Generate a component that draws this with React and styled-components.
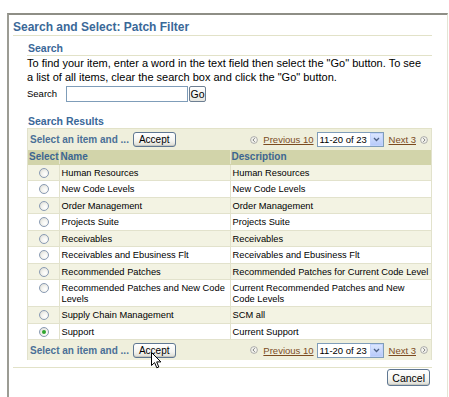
import React from "react";
import styled, { createGlobalStyle } from "styled-components";

const GlobalStyle = createGlobalStyle`
  html, body { margin: 0; padding: 0; background: #fff; overflow: hidden; }
  body { font-family: "Liberation Sans", Arial, sans-serif; color: #000; }
  * { box-sizing: border-box; }
`;

const Page = styled.div`
  padding: 13px 0 0 7px;
  height: 397px;
`;

const Dialog = styled.div`
  width: 441px;
  height: 400px;
  border-top: 2px solid #8e8e86;
  border-left: 2px solid #9c9c94;
  border-right: 1px solid #e4e4d4;
  padding: 0 15px 0 4px;
`;

const Title = styled.h1`
  margin: 0;
  padding-top: 4px;
  font-size: 12px;
  font-weight: bold;
  line-height: 16px;
  color: #3a6898;
  border-bottom: 1px solid #e2e2c8;
`;

const Section = styled.div`
  padding-left: 14px;
`;

const SubHeader = styled.h2`
  margin: ${(p) => p.$top}px 0 0;
  padding-left: 1px;
  font-size: 10.5px;
  font-weight: bold;
  line-height: 14px;
  color: #3a6898;
  border-bottom: 1px solid #e2e2c8;
`;

const Para = styled.p`
  margin: 0;
  font-size: 11px;
  line-height: 14px;
`;

const SearchRow = styled.div`
  display: flex;
  align-items: center;
  height: 17px;
  margin-top: 1px;
`;

const Label = styled.span`
  width: 39px;
  font-size: 9.5px;
`;

const TextInput = styled.input`
  width: 122px;
  height: 16px;
  border: 1px solid #7f9db9;
  padding: 0 2px;
  margin: 0;
  background: #fff;
`;

const SmallButton = styled.button`
  margin: 0 0 0 1px;
  width: 17px;
  height: 16px;
  padding: 0;
  font-family: "Liberation Sans", Arial, sans-serif;
  font-size: 10.5px;
  border: 1px solid #6d7f93;
  border-radius: 2px;
  background: linear-gradient(#ffffff, #e6e6e0);
  color: #000;
`;

const Results = styled.div`
  width: 405px;
  border-left: 1px solid #e2e2cc;
  border-right: 1px solid #e2e2cc;
`;

const Bar = styled.div`
  display: flex;
  align-items: center;
  justify-content: space-between;
  height: ${(p) => p.$h}px;
  padding: 0 3px 0 2px;
  background: #efefdc;
`;

const BarLeft = styled.div`
  display: flex;
  align-items: center;
`;

const BarText = styled.span`
  font-size: 10px;
  font-weight: bold;
  color: #4b7097;
`;

const ButtonWrap = styled.span`
  position: relative;
  margin-left: 4px;
  display: inline-flex;
`;

const Button = styled.button`
  height: ${(p) => p.$h || 15}px;
  padding: 0 ${(p) => p.$px || 5}px;
  margin: 0;
  font-family: "Liberation Sans", Arial, sans-serif;
  font-size: ${(p) => p.$fs || 10}px;
  color: #000;
  border: 1px solid #5f7792;
  border-radius: 3px;
  background: linear-gradient(#ffffff 0%, #f4f4f0 60%, #dcdcd4 100%);
  box-shadow: inset 0 -1px 0 #c8c8c0;
`;

const Nav = styled.div`
  display: flex;
  align-items: center;
  font-size: 9.5px;
`;

const Link = styled.a`
  color: #7b4b1f;
  text-decoration: underline;
  margin: 0 ${(p) => p.$mr}px 0 ${(p) => p.$ml}px;
  cursor: pointer;
`;

const Select = styled.div`
  display: flex;
  align-items: stretch;
  width: 67px;
  height: 15px;
  border: 1px solid #7f9db9;
  background: #fff;
`;

const SelectText = styled.span`
  flex: 1;
  font-size: 9.5px;
  line-height: 13px;
  padding-left: 2px;
`;

const SelectArrow = styled.span`
  width: 13px;
  display: flex;
  align-items: center;
  justify-content: center;
  background: linear-gradient(#dbe6fe, #b7cafa);
  border: 1px solid #c3d3fd;
`;

const Table = styled.table`
  width: 403px;
  table-layout: fixed;
  border-collapse: collapse;
  font-size: 9.3px;
`;

const Th = styled.th`
  text-align: left;
  font-size: 10px;
  font-weight: bold;
  color: #3c6691;
  background: #d2d4aa;
  line-height: 13px;
  height: 14px;
  padding: 0 0 0 1px;
  border-bottom: 1px solid #d2d4aa;
  border-left: 1px solid #e6e6d0;
  white-space: nowrap;
  &:first-child { border-left: none; }
`;

const Tr = styled.tr`
  background: ${(p) => (p.$band ? "#f3f3e3" : "#ffffff")};
`;

const Td = styled.td`
  vertical-align: top;
  line-height: 10.5px;
  padding: 3px 0 2px 2px;
  border-bottom: 1px solid #e2e2cc;
  border-left: 1px solid #e2e2cc;
  white-space: nowrap;
  overflow: hidden;
  &:first-child { border-left: none; text-align: center; padding: 3px 0 2px 0; }
`;

const Radio = styled.span`
  display: inline-flex;
  align-items: center;
  justify-content: center;
  width: 10px;
  height: 10px;
  margin-left: 1px;
  border-radius: 50%;
  border: 1px solid #8a9bb3;
  background: radial-gradient(circle at 65% 65%, #ffffff 0%, #f2f2ee 45%, #d4d4cc 100%);
  vertical-align: top;
  &::after {
    content: "";
    width: 4px;
    height: 4px;
    border-radius: 50%;
    background: ${(p) => (p.$checked ? "#2fa62f" : "transparent")};
  }
`;

const Footer = styled.div`
  margin-top: 7px;
  border-top: 1px solid #e2e2c8;
  display: flex;
  justify-content: flex-end;
  padding: 1px 2px 0 0;
`;

const Cursor = styled.svg`
  position: absolute;
  left: 18px;
  top: 9px;
  pointer-events: none;
`;

const NavIcon = ({ dir }) => (
  <svg width="8" height="8" viewBox="0 0 8 8">
    <circle cx="4" cy="4" r="3.4" fill="#f4f4ee" stroke="#9a9a9a" strokeWidth="0.8" />
    <path
      d={dir === "prev" ? "M4.8 2.2 L2.9 4 L4.8 5.8" : "M3.2 2.2 L5.1 4 L3.2 5.8"}
      fill="none"
      stroke="#777"
      strokeWidth="0.9"
    />
  </svg>
);

const Pager = () => (
  <Nav>
    <NavIcon dir="prev" />
    <Link $ml={5} $mr={3}>Previous 10</Link>
    <Select>
      <SelectText>11-20 of 23</SelectText>
      <SelectArrow>
        <svg width="7" height="5" viewBox="0 0 7 5">
          <path d="M1 1 L3.5 3.5 L6 1" fill="none" stroke="#4d6185" strokeWidth="1.3" />
        </svg>
      </SelectArrow>
    </Select>
    <Link $ml={5} $mr={4}>Next 3</Link>
    <NavIcon dir="next" />
  </Nav>
);

const rows = [
  ["Human Resources", "Human Resources"],
  ["New Code Levels", "New Code Levels"],
  ["Order Management", "Order Management"],
  ["Projects Suite", "Projects Suite"],
  ["Receivables", "Receivables"],
  ["Receivables and Ebusiness Flt", "Receivables and Ebusiness Flt"],
  ["Recommended Patches", "Recommended Patches for Current Code Level"],
  [
    ["Recommended Patches and New Code", "Levels"],
    ["Current Recommended Patches and New", "Code Levels"],
  ],
  ["Supply Chain Management", "SCM all"],
  ["Support", "Current Support"],
];

const Cell = ({ v }) =>
  Array.isArray(v) ? (
    <>
      {v[0]}
      <br />
      {v[1]}
    </>
  ) : (
    v
  );

export default function App() {
  return (
    <>
      <GlobalStyle />
      <Page>
        <Dialog>
          <Title>Search and Select: Patch Filter</Title>
          <Section>
            <SubHeader $top={5}>Search</SubHeader>
            <Para>
              To find your item, enter a word in the text field then select the "Go" button. To see
              <br />a list of all items, clear the search box and click the "Go" button.
            </Para>
            <SearchRow>
              <Label>Search</Label>
              <TextInput />
              <SmallButton>Go</SmallButton>
            </SearchRow>
            <SubHeader $top={12}>Search Results</SubHeader>
            <Results>
              <Bar $h={21}>
                <BarLeft>
                  <BarText>Select an item and ...</BarText>
                  <ButtonWrap>
                    <Button>Accept</Button>
                  </ButtonWrap>
                </BarLeft>
                <Pager />
              </Bar>
              <Table>
                <colgroup>
                  <col style={{ width: 31 }} />
                  <col style={{ width: 171 }} />
                  <col style={{ width: 201 }} />
                </colgroup>
                <thead>
                  <tr>
                    <Th>Select</Th>
                    <Th>Name</Th>
                    <Th>Description</Th>
                  </tr>
                </thead>
                <tbody>
                  {rows.map((r, i) => (
                    <Tr key={i} $band={i % 2 === 0}>
                      <Td>
                        <Radio $checked={i === 9} />
                      </Td>
                      <Td>
                        <Cell v={r[0]} />
                      </Td>
                      <Td>
                        <Cell v={r[1]} />
                      </Td>
                    </Tr>
                  ))}
                </tbody>
              </Table>
              <Bar $h={20}>
                <BarLeft>
                  <BarText>Select an item and ...</BarText>
                  <ButtonWrap>
                    <Button>Accept</Button>
                    <Cursor width="11" height="17" viewBox="0 0 11 17">
                      <path
                        d="M0.5 0.5 L0.5 13.5 L3.6 10.6 L5.8 15.8 L7.8 15 L5.7 9.9 L9.9 9.9 Z"
                        fill="#fff"
                        stroke="#000"
                        strokeWidth="1"
                        strokeLinejoin="miter"
                      />
                    </Cursor>
                  </ButtonWrap>
                </BarLeft>
                <Pager />
              </Bar>
            </Results>
          </Section>
          <Footer>
            <Button $h={17} $px={4} $fs={10.5}>Cancel</Button>
          </Footer>
        </Dialog>
      </Page>
    </>
  );
}
